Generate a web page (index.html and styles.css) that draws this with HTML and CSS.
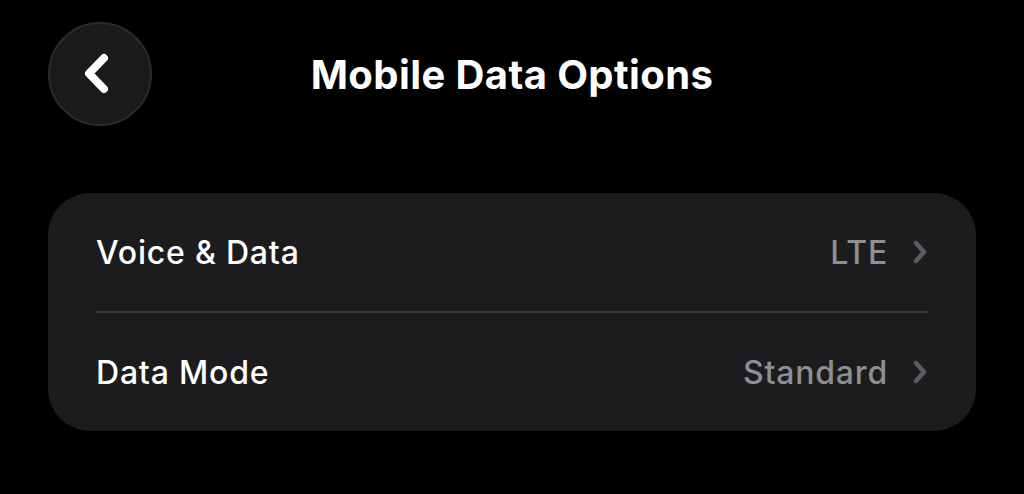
FILE: index.html
```html
<!DOCTYPE html>
<html lang="en">
<head>
  <meta charset="UTF-8" />
  <meta name="viewport" content="width=device-width, initial-scale=1.0"/>
  <title>Mobile Data Options</title>
  <link rel="stylesheet" href="styles.css">
</head>
<body>
  <header class="topbar">
    <button class="back" aria-label="Back">
      <svg width="32" height="44" viewBox="0 0 32 44">
        <path d="M23 6 L8 21.5 L23 37" fill="none" stroke="#fff" stroke-width="8" stroke-linecap="round" stroke-linejoin="round"/>
      </svg>
    </button>
    <h1 class="title">Mobile Data Options</h1>
  </header>

  <section class="card">
    <div class="row">
      <span class="label">Voice &amp; Data</span>
      <span class="value">LTE</span>
      <svg class="chev" width="16" height="26" viewBox="0 0 16 26">
        <path d="M4 4 L12 13 L4 22" fill="none" stroke="#5c5c60" stroke-width="4.5" stroke-linecap="round" stroke-linejoin="round"/>
      </svg>
    </div>
    <div class="divider"></div>
    <div class="row">
      <span class="label">Data Mode</span>
      <span class="value">Standard</span>
      <svg class="chev" width="16" height="26" viewBox="0 0 16 26">
        <path d="M4 4 L12 13 L4 22" fill="none" stroke="#5c5c60" stroke-width="4.5" stroke-linecap="round" stroke-linejoin="round"/>
      </svg>
    </div>
  </section>
</body>
</html>
```

FILE: styles.css
```css
body {
  margin: 0;
  background: #000;
  color: #fff;
  font-family: Inter, "Noto Sans", sans-serif;
  padding: 22px 48px 0;
}
.topbar {
  display: grid;
  grid-template-columns: 104px 1fr 104px;
  align-items: center;
}
.back {
  width: 104px;
  height: 104px;
  border-radius: 50%;
  background: #1a1a1b;
  border: 2px solid #2b2b2d;
  display: flex;
  align-items: center;
  justify-content: center;
  padding: 0 6px 0 0;
}
.title {
  margin: 0;
  text-align: center;
  font-size: 40px;
  font-weight: 700;
  letter-spacing: 0.4px;
}
.card {
  margin-top: 67px;
  background: #1c1c1e;
  border-radius: 42px;
  padding: 0 48px;
}
.row {
  display: flex;
  align-items: center;
  height: 118px;
  font-size: 32px;
  letter-spacing: 0.8px;
}
.label {
  flex: 1;
  font-weight: 500;
}
.value {
  color: #8e8e93;
  font-weight: 500;
  margin-right: 24px;
}
.chev {
  display: block;
}
.divider {
  height: 2px;
  background: #38383a;
}
```
